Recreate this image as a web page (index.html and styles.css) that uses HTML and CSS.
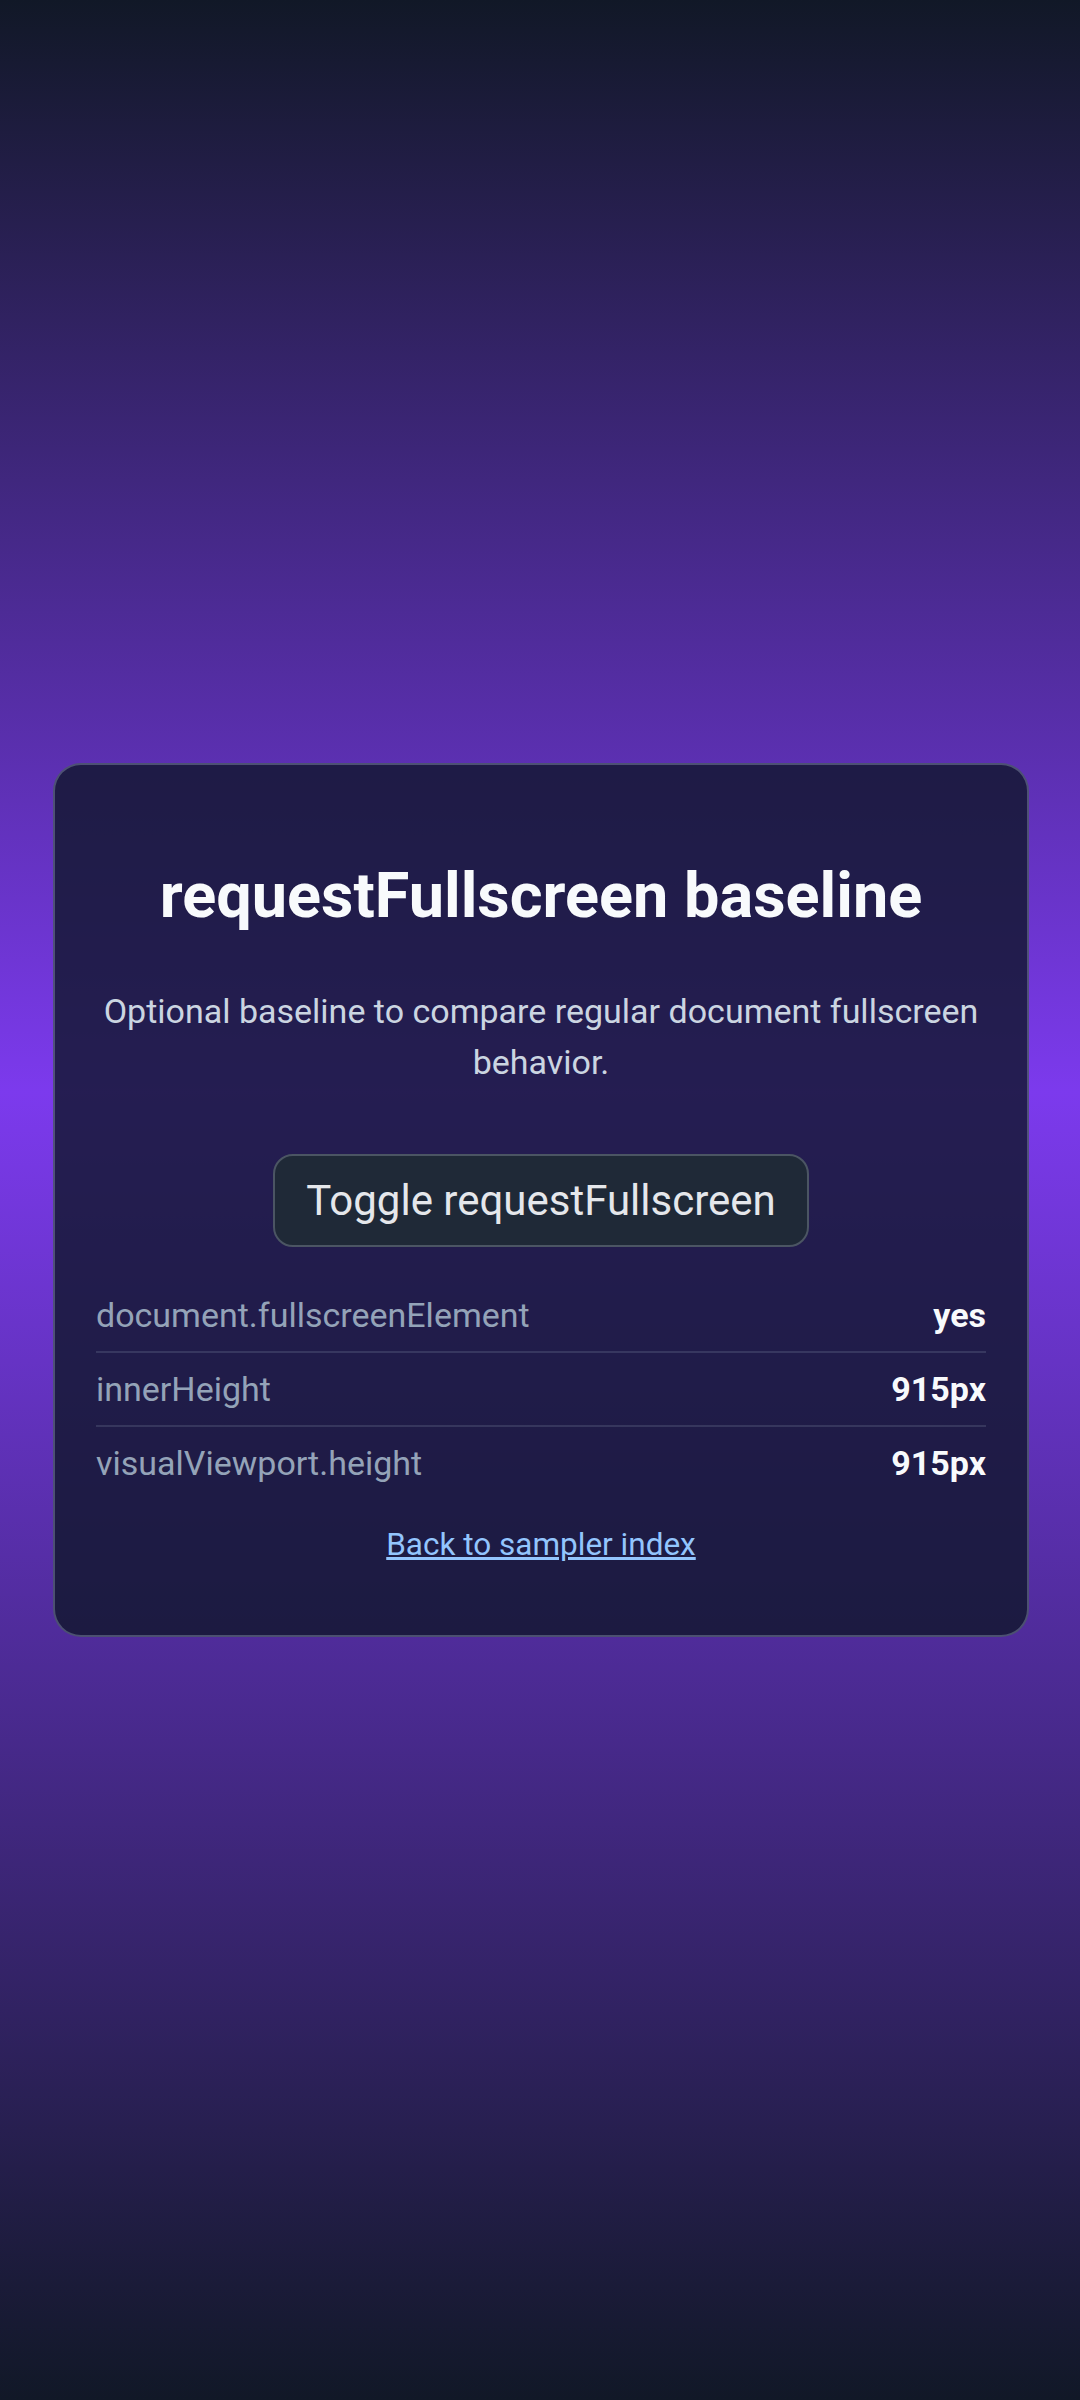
FILE: index.html
```html
<!DOCTYPE html>
<html lang="en">
<head>
    <meta charset="UTF-8">
    <meta name="viewport" content="width=device-width, initial-scale=1.0">
    <title>requestFullscreen baseline</title>
    <link rel="stylesheet" href="styles.css">
</head>
<body>
    <main class="card">
        <h1 class="title">requestFullscreen baseline</h1>
        <p class="intro">Optional baseline to compare regular document fullscreen behavior.</p>

        <div class="actions">
            <button class="toggle" type="button">Toggle requestFullscreen</button>
        </div>

        <dl class="stats">
            <div class="row">
                <dt>document.fullscreenElement</dt>
                <dd>yes</dd>
            </div>
            <div class="row">
                <dt>innerHeight</dt>
                <dd>915px</dd>
            </div>
            <div class="row">
                <dt>visualViewport.height</dt>
                <dd>915px</dd>
            </div>
        </dl>

        <a class="back" href="#">Back to sampler index</a>
    </main>
</body>
</html>
```

FILE: styles.css
```css
html, body {
    margin: 0;
    padding: 0;
}

body {
    min-height: 100vh;
    box-sizing: border-box;
    padding: 0 51px 0 53px;
    display: flex;
    align-items: center;
    justify-content: center;
    background: linear-gradient(180deg, #111827 0%, #7c3aed 45.5%, #111827 100%);
    font-family: Roboto, "Noto Sans", sans-serif;
    color: #f8fafc;
}

.card {
    width: 100%;
    box-sizing: border-box;
    padding: 94px 41px 70px;
    background: rgba(15, 23, 42, 0.8);
    border: 2px solid rgba(148, 163, 184, 0.4);
    border-radius: 28px;
    display: flex;
    flex-direction: column;
    align-items: center;
}

.title {
    margin: 0;
    font-size: 63px;
    line-height: 74px;
    font-weight: 700;
    text-align: center;
    color: #f8fafc;
}

.intro {
    margin: 53px 0 0;
    font-size: 34px;
    line-height: 51px;
    text-align: center;
    color: #cbd5e1;
}

.actions {
    margin-top: 66px;
}

.toggle {
    height: 93px;
    padding: 0 31px;
    font-family: inherit;
    font-size: 42px;
    color: #e5e7eb;
    background: #1f2937;
    border: 2px solid #4b5563;
    border-radius: 20px;
}

.stats {
    width: 100%;
    margin: 32px 0 0;
}

.row {
    display: flex;
    align-items: center;
    justify-content: space-between;
    height: 72px;
    border-bottom: 2px solid rgba(148, 163, 184, 0.2);
}

.row:last-child {
    border-bottom: 0;
}

.row dt {
    font-size: 34px;
    color: #94a3b8;
}

.row dd {
    margin: 0;
    font-size: 34px;
    font-weight: 700;
    color: #f8fafc;
}

.back {
    margin-top: 26px;
    font-size: 31.5px;
    line-height: 40px;
    color: #93c5fd;
}
```
